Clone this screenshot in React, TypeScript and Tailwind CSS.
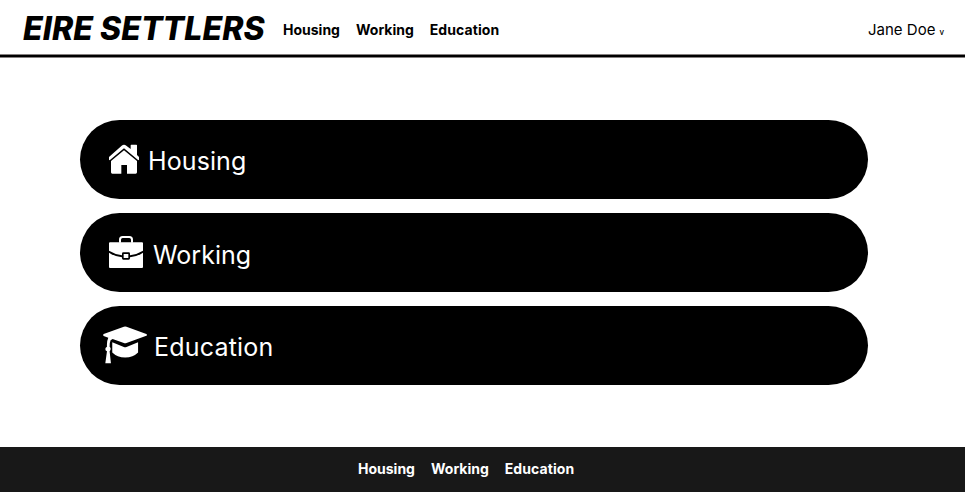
import React from "react";

const links = ["Housing", "Working", "Education"];

function HouseIcon() {
  return (
    <svg viewBox="42 28 90 90" className="mt-6 ml-[29px] h-[30px] w-[30px] shrink-0" fill="white">
      <path d="M42 67 L80 33 Q87 27 94 33 L107 43 V32 Q107 30 109 30 H124 Q126 30 126 32 V61 L132 67 V75 L130 77 L87 41 L44 77 L42 75Z" />
      <path d="M87 47 L126 79 V113 Q126 117 122 117 H96 V91 H79 V117 H52 Q48 117 48 113 V79Z" />
    </svg>
  );
}

function BriefcaseIcon() {
  return (
    <svg viewBox="42 24 102 96" className="mt-[23px] ml-[29px] h-8 w-[34px] shrink-0" fill="white">
      <path d="M75 44 V35 Q75 27 83 27 H103 Q111 27 111 35 V44" fill="none" stroke="white" strokeWidth="6" />
      <path d="M45 43 H141 Q144 43 144 46 V68 Q124 80 105 82 V77 Q105 73 101 73 H85 Q81 73 81 77 V82 Q62 80 42 68 V46 Q42 43 45 43Z" />
      <path d="M42 74 Q60 86 81 88 V91 Q81 95 85 95 H101 Q105 95 105 91 V88 Q126 86 144 74 V117 Q144 120 141 120 H45 Q42 120 42 117Z" />
      <rect x="86" y="78" width="14" height="12" />
    </svg>
  );
}

function GraduationIcon() {
  return (
    <svg viewBox="23 25 133 114" className="mt-5 ml-[23px] h-[38px] w-11 shrink-0" fill="white">
      <path d="M86 27 Q90 25 94 27 L154 49 Q158 52 154 54 L94 76 Q90 78 86 76 L52 64 L46 68 Q43 74 43 87 Q47 90 46 95 Q45 99 43 101 L47 137 H30 L35 101 Q30 99 30 94 Q30 89 35 87 Q34 70 39 60 L25 55 Q22 52 25 49Z" />
      <path d="M51 74 L86 88 Q90 90 94 88 L129 74 V105 Q114 120 90 120 Q66 120 51 105Z" />
    </svg>
  );
}

export default function App() {
  return (
    <div className="flex h-[492px] w-[965px] flex-col overflow-hidden bg-white font-['Inter',sans-serif] whitespace-nowrap text-black">
      <header className="flex h-[54px] shrink-0 pl-[23px]">
        <h1 className="mt-[9px] w-[260px] text-[32px] leading-10 font-extrabold italic tracking-[0.03px]">EIRE SETTLERS</h1>
        <nav className="mt-5 flex gap-4 text-sm leading-5 font-bold">
          {links.map((l) => <a key={l} className="last:tracking-[0.08px]">{l}</a>)}
        </nav>
        <div className="mt-5 mr-[21px] ml-auto flex items-baseline gap-1 text-[15px] leading-5">
          <span>Jane Doe</span>
          <span className="text-[8px] font-medium">v</span>
        </div>
      </header>
      <div className="h-1 shrink-0 border-y border-[#858080] bg-black" />
      <main className="flex h-[389px] shrink-0 flex-col gap-3.5 pt-[62px] pl-20 text-[25px] leading-[30px] text-white">
        <a className="flex h-[79px] w-[788px] rounded-full bg-black">
          <HouseIcon />
          <span className="mt-[26px] ml-[9px] tracking-[0.1px]">Housing</span>
        </a>
        <a className="flex h-[79px] w-[788px] rounded-full bg-black">
          <BriefcaseIcon />
          <span className="mt-[27px] ml-2.5">Working</span>
        </a>
        <a className="flex h-[79px] w-[788px] rounded-full bg-black">
          <GraduationIcon />
          <span className="mt-[26px] ml-[7px] tracking-[0.2px]">Education</span>
        </a>
      </main>
      <footer className="flex h-[45px] shrink-0 gap-4 bg-[#181818] pt-3 pl-[358px] text-sm leading-5 font-bold text-white">
        {links.map((l) => <a key={l} className="last:tracking-[0.08px]">{l}</a>)}
      </footer>
    </div>
  );
}
